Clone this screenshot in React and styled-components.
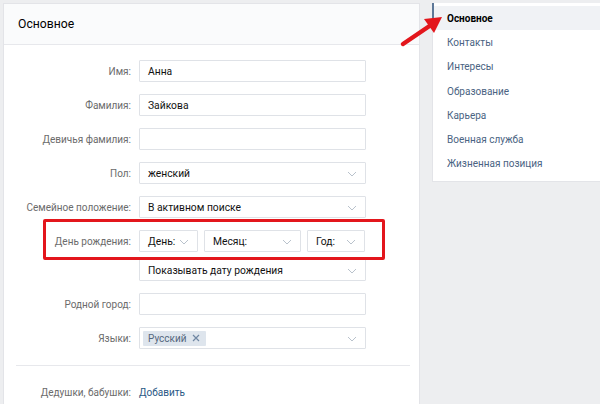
import React from "react";
import styled, { createGlobalStyle } from "styled-components";

const Global = createGlobalStyle`
  html, body { margin: 0; padding: 0; background: #edeef0; overflow: hidden; }
  body { font-family: Roboto, "Open Sans", "DejaVu Sans", sans-serif; -webkit-font-smoothing: antialiased; }
`;

const Page = styled.div`
  position: relative;
  width: 600px;
  height: 404px;
  overflow: hidden;
  display: flex;
  gap: 12px;
  padding: 3px 0 0 3px;
  box-sizing: border-box;
`;

const MainPanel = styled.div`
  width: 417px;
  flex: none;
  background: #fff;
  border: 1px solid #e3e4e8;
  border-bottom: none;
  box-sizing: border-box;
  height: 430px;
`;

const PanelHeader = styled.div`
  height: 40px;
  background: #fafbfc;
  border-bottom: 1px solid #e7e8ec;
  display: flex;
  align-items: center;
  padding-left: 14px;
  font-size: 12.2px;
  color: #000;
`;

const Form = styled.div`
  padding-top: 15px;
  display: flex;
  flex-direction: column;
`;

const Row = styled.div`
  display: flex;
  align-items: center;
  height: 22px;
  margin-top: ${(p) => p.$mt ?? 12}px;
`;

const Label = styled.div`
  width: 127px;
  flex: none;
  text-align: right;
  font-size: 10px;
  color: #6b6b6b;
  padding-right: 8px;
  box-sizing: content-box;
`;

const Input = styled.div`
  width: ${(p) => p.$w ?? 227}px;
  height: 22px;
  box-sizing: border-box;
  border: 1px solid #dfe2e7;
  border-radius: 1px;
  display: flex;
  align-items: center;
  padding: 0 8px;
  font-size: 10.3px;
  color: #111;
  position: relative;
  flex: none;
`;

const Selects = styled.div`
  display: flex;
  gap: 6px;
`;

const Chevron = styled.svg`
  position: absolute;
  right: 8px;
  top: 8px;
  width: 10px;
  height: 6px;
`;

const Tag = styled.span`
  background: #dee5ed;
  color: #55677d;
  font-size: 10px;
  height: 15px;
  display: inline-flex;
  align-items: center;
  gap: 6px;
  padding: 0 6px 0 5px;
  margin-left: -5px;
  border-radius: 1px;
`;

const Divider = styled.div`
  height: 1px;
  background: #e7e8ec;
  margin: 16px 9px 0 12px;
`;

const Link = styled.span`
  color: #2a5885;
  font-size: 10px;
`;

const Side = styled.div`
  width: 200px;
  flex: none;
  align-self: flex-start;
  background: #fff;
  border: 1px solid #e3e4e8;
  border-top: none;
  border-right: none;
  box-sizing: border-box;
  padding: 3px 0 5px;
  position: relative;
`;

const MenuItem = styled.div`
  height: 24.3px;
  display: flex;
  align-items: center;
  padding-left: 14px;
  font-size: 10px;
  color: ${(p) => (p.$active ? "#000" : "#4a6382")};
  font-weight: ${(p) => (p.$active ? 700 : 400)};
  background: ${(p) => (p.$active ? "#f0f2f5" : "transparent")};
`;

const ActiveLine = styled.div`
  position: absolute;
  left: -1px;
  top: 0;
  width: 2px;
  height: 24px;
  background: #5d7898;
`;

const Highlight = styled.div`
  position: absolute;
  left: 43px;
  top: 219px;
  width: 342px;
  height: 41px;
  box-sizing: border-box;
  border: 3px solid #e3161c;
  border-radius: 2px;
  pointer-events: none;
`;

const ArrowSvg = styled.svg`
  position: absolute;
  left: 0;
  top: 0;
  width: 600px;
  height: 404px;
  pointer-events: none;
`;

const Chev = () => (
  <Chevron viewBox="0 0 10 6">
    <path d="M1 1l4 4 4-4" fill="none" stroke="#b9c2cc" strokeWidth="1" />
  </Chevron>
);

const Select = ({ w, children }) => (
  <Input $w={w}>
    {children}
    <Chev />
  </Input>
);

const menu = [
  "Основное",
  "Контакты",
  "Интересы",
  "Образование",
  "Карьера",
  "Военная служба",
  "Жизненная позиция",
];

export default function App() {
  return (
    <>
      <Global />
      <Page>
        <MainPanel>
          <PanelHeader>Основное</PanelHeader>
          <Form>
            <Row $mt={0}>
              <Label>Имя:</Label>
              <Input>Анна</Input>
            </Row>
            <Row>
              <Label>Фамилия:</Label>
              <Input>Зайкова</Input>
            </Row>
            <Row>
              <Label>Девичья фамилия:</Label>
              <Input />
            </Row>
            <Row>
              <Label>Пол:</Label>
              <Select>женский</Select>
            </Row>
            <Row>
              <Label>Семейное положение:</Label>
              <Select>В активном поиске</Select>
            </Row>
            <Row>
              <Label>День рождения:</Label>
              <Selects>
                <Select w={59}>День:</Select>
                <Select w={97}>Месяц:</Select>
                <Select w={58}>Год:</Select>
              </Selects>
            </Row>
            <Row $mt={7}>
              <Label />
              <Select>Показывать дату рождения</Select>
            </Row>
            <Row>
              <Label>Родной город:</Label>
              <Input />
            </Row>
            <Row>
              <Label>Языки:</Label>
              <Select>
                <Tag>
                  Русский
                  <svg width="8" height="8" viewBox="0 0 8 8">
                    <path d="M1 1l6 6M7 1l-6 6" stroke="#6f87a3" strokeWidth="1.2" />
                  </svg>
                </Tag>
              </Select>
            </Row>
            <Divider />
            <Row $mt={15}>
              <Label>Дедушки, бабушки:</Label>
              <Link>Добавить</Link>
            </Row>
          </Form>
        </MainPanel>
        <Side>
          <ActiveLine />
          {menu.map((m, i) => (
            <MenuItem key={m} $active={i === 0}>
              {m}
            </MenuItem>
          ))}
        </Side>
        <Highlight />
        <ArrowSvg viewBox="0 0 600 404">
          <line x1="403" y1="44" x2="431" y2="25" stroke="#e3161c" strokeWidth="4.5" strokeLinecap="round" />
          <polygon points="442,17 424,19 434,33" fill="#e3161c" />
        </ArrowSvg>
      </Page>
    </>
  );
}
